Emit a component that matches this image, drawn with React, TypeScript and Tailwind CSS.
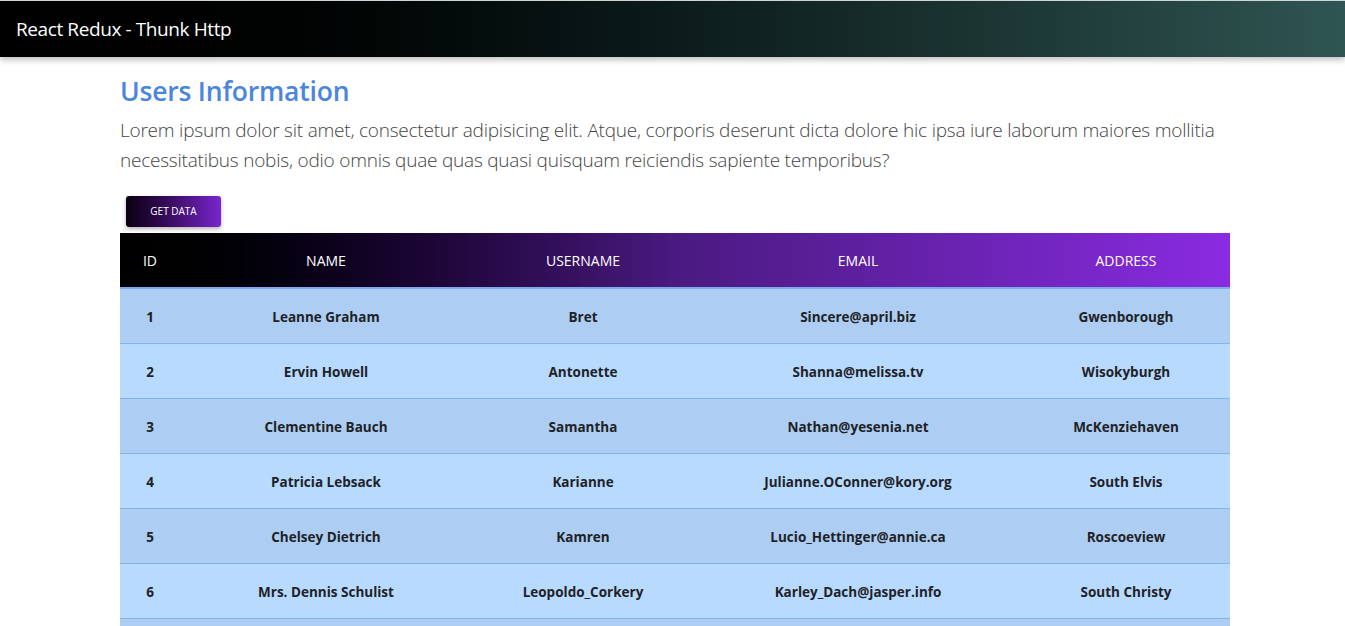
import React from "react";

const users = [
  { id: 1, name: "Leanne Graham", username: "Bret", email: "Sincere@april.biz", city: "Gwenborough" },
  { id: 2, name: "Ervin Howell", username: "Antonette", email: "Shanna@melissa.tv", city: "Wisokyburgh" },
  { id: 3, name: "Clementine Bauch", username: "Samantha", email: "Nathan@yesenia.net", city: "McKenziehaven" },
  { id: 4, name: "Patricia Lebsack", username: "Karianne", email: "Julianne.OConner@kory.org", city: "South Elvis" },
  { id: 5, name: "Chelsey Dietrich", username: "Kamren", email: "Lucio_Hettinger@annie.ca", city: "Roscoeview" },
  { id: 6, name: "Mrs. Dennis Schulist", username: "Leopoldo_Corkery", email: "Karley_Dach@jasper.info", city: "South Christy" },
];

export default function App() {
  return (
    <div className="h-[626px] overflow-hidden bg-white" style={{ fontFamily: '"Open Sans", "Noto Sans", sans-serif' }}>
      <nav className="h-[57px] border-t border-[#cfd4d4] bg-gradient-to-r from-[#000000] to-[#2f5552] shadow-[0_3px_6px_rgba(0,0,0,0.25)] flex items-center px-4">
        <span className="text-white text-[19px] tracking-[-0.4px]">React Redux - Thunk Http</span>
      </nav>
      <div className="ml-[120px] w-[1110px]">
        <h2 className="mt-[16px] text-[26.5px] leading-[36px] font-semibold text-[#4a85e0] tracking-[-0.2px]">Users Information</h2>
        <p className="mt-[6px] text-[19px] leading-[30px] font-light text-[#444] tracking-[-0.22px]">
          Lorem ipsum dolor sit amet, consectetur adipisicing elit. Atque, corporis deserunt dicta dolore hic ipsa iure laborum maiores mollitia necessitatibus nobis, odio omnis quae quas quasi quisquam reiciendis sapiente temporibus?
        </p>
        <button className="mt-[21px] ml-[6px] w-[95px] h-[31px] rounded-[3px] bg-gradient-to-r from-[#0b0112] to-[#7a25cf] text-white text-[10px] shadow-[0_2px_4px_rgba(0,0,0,0.3)]">
          GET DATA
        </button>
        <table className="mt-[6px] w-[1110px] border-collapse table-fixed">
          <colgroup>
            <col className="w-[60px]" />
            <col className="w-[292px]" />
            <col className="w-[222px]" />
            <col className="w-[328px]" />
            <col className="w-[208px]" />
          </colgroup>
          <thead>
            <tr className="bg-gradient-to-r from-[#000000] via-[#4a1a80] to-[#8a2be2] text-white text-[14px] font-normal">
              <th className="h-[55px] font-normal text-center border-b-2 border-[#7fa8ee]">ID</th>
              <th className="font-normal text-center border-b-2 border-[#7fa8ee]">NAME</th>
              <th className="font-normal text-center border-b-2 border-[#7fa8ee]">USERNAME</th>
              <th className="font-normal text-center border-b-2 border-[#7fa8ee]">EMAIL</th>
              <th className="font-normal text-center border-b-2 border-[#7fa8ee]">ADDRESS</th>
            </tr>
          </thead>
          <tbody>
            {users.map((u, i) => (
              <tr
                key={u.id}
                className={`${i % 2 === 0 ? "bg-[#adcef2]" : "bg-[#b8daff]"} text-[13.5px] font-bold text-[#1e2226] border-b border-[#82b4ee]`}
              >
                <td className="h-[55px] pt-[3px] text-center">{u.id}</td>
                <td className="pt-[3px] text-center">{u.name}</td>
                <td className="pt-[3px] text-center">{u.username}</td>
                <td className="pt-[3px] text-center">{u.email}</td>
                <td className="pt-[3px] text-center">{u.city}</td>
              </tr>
            ))}
            <tr className="bg-[#adcef2]">
              <td className="h-[55px]" colSpan={5}></td>
            </tr>
          </tbody>
        </table>
      </div>
    </div>
  );
}
